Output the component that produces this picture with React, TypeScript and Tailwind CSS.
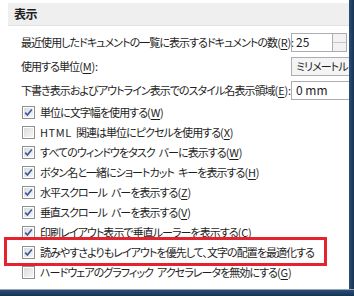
import type { ReactNode } from 'react';

const font = "[font-family:'Noto_Sans_CJK_JP','Noto_Sans',sans-serif] [font-feature-settings:'palt']";

// mnemonic letter with underline, like (R)
const Key = ({ k }: { k: string }) => (
    <span className="tracking-[-0.2px]">
        (<span className="underline underline-offset-2">{k}</span>)
    </span>
);

// word gap, the tight tracking eats normal spaces
const Sp = () => <span className="inline-block w-[4px]" />;

const CheckBox = ({ checked }: { checked: boolean }) => (
    <span className="w-[13px] h-[13px] shrink-0 border border-[#8e8f8f] bg-white p-[1px] flex">
        <span className="flex-1 bg-gradient-to-br from-[#dcdcdc] to-[#f6f6f6] flex items-center justify-center">
            {checked && (
                <svg width="9" height="9" viewBox="0 0 9 9">
                    <path d="M1.2 4.6 L3.4 7 L7.8 1.4" fill="none" stroke="#3a55a0" strokeWidth="1.6" />
                </svg>
            )}
        </span>
    </span>
);

const CheckRow = ({ checked, children }: { checked: boolean; children: ReactNode }) => (
    <div className="h-[20px] flex items-center pl-[14px] gap-[5px] whitespace-nowrap">
        <CheckBox checked={checked} />
        <span>{children}</span>
    </div>
);

const FieldRow = ({ label, children }: { label: ReactNode; children: ReactNode }) => (
    <div className="grid grid-cols-[283px_80px] items-center h-[24px]">
        <span className="pl-[13px] whitespace-nowrap">{label}</span>
        {children}
    </div>
);

export default function App() {
    return (
        <div className={`w-[354px] h-[296px] bg-white flex flex-col overflow-hidden relative text-[11px] tracking-[-0.95px] text-[#1e1e1e] ${font}`}>
            <div className="flex flex-1 min-h-0">
                <div className="flex-1 min-w-0 overflow-hidden pt-[3px] pl-[8px]">
                    {/* section header */}
                    <div className="h-[23px] bg-[#efefef] border-b border-[#e2e2e2] flex items-center pl-[6px] font-bold text-[12px] tracking-[-0.5px]">
                        表示
                    </div>

                    <div className="pt-[4px]">
                        <FieldRow label={<>最近使用したドキュメントの一覧に表示するドキュメントの数<Key k="R" />:</>}>
                            <div className="flex h-[19px]">
                                <div className="w-[42px] border border-[#abadb3] flex items-center pl-[4px] text-[12px] tracking-normal">25</div>
                                <div className="w-[14px] flex flex-col border border-l-0 border-[#abadb3]">
                                    <div className="flex-1 border-b border-[#c8c8c8] bg-[#f2f2f2]" />
                                    <div className="flex-1 bg-[#f2f2f2]" />
                                </div>
                            </div>
                        </FieldRow>
                        <FieldRow label={<>使用する単位<Key k="M" />:</>}>
                            <div className="h-[19px] border border-[#abadb3] bg-[#f4f4f4] flex items-center pl-[4px] whitespace-nowrap overflow-hidden">
                                ミリメートル
                            </div>
                        </FieldRow>
                        <FieldRow label={<>下書き表示およびアウトライン表示でのスタイル名表示領域<Key k="E" />:</>}>
                            <div className="h-[19px] border border-[#abadb3] flex items-center pl-[4px] text-[12px] tracking-normal">0 mm</div>
                        </FieldRow>
                    </div>

                    <div>
                        <CheckRow checked>単位に文字幅を使用する<Key k="W" /></CheckRow>
                        <CheckRow checked={false}><span className="tracking-[0.6px]">HTML</span><Sp />関連は単位にピクセルを使用する<Key k="X" /></CheckRow>
                        <CheckRow checked>すべてのウィンドウをタスク<Sp />バーに表示する<Key k="W" /></CheckRow>
                        <CheckRow checked>ボタン名と一緒にショートカット<Sp />キーを表示する<Key k="H" /></CheckRow>
                        <CheckRow checked>水平スクロール<Sp />バーを表示する<Key k="Z" /></CheckRow>
                        <CheckRow checked>垂直スクロール<Sp />バーを表示する<Key k="V" /></CheckRow>
                        <CheckRow checked>印刷レイアウト表示で垂直ルーラーを表示する<Key k="C" /></CheckRow>
                        <CheckRow checked>読みやすさよりもレイアウトを優先して、文字の配置を最適化する</CheckRow>
                        <CheckRow checked={false}>ハードウェアのグラフィック<Sp />アクセラレータを無効にする<Key k="G" /></CheckRow>
                    </div>
                </div>
                {/* window frame edge */}
                <div className="w-[5px] shrink-0 bg-gradient-to-r from-[#2a4f7a] to-[#17324f]" />
            </div>
            <div className="h-[7px] shrink-0 border-t border-[#9aa6b4] bg-gradient-to-b from-[#2a4f7a] to-[#17324f]" />

            {/* red annotation box */}
            <div className="absolute left-[4px] top-[237px] w-[323px] h-[29px] border-[3px] border-[#e5222e]" />
        </div>
    );
}
